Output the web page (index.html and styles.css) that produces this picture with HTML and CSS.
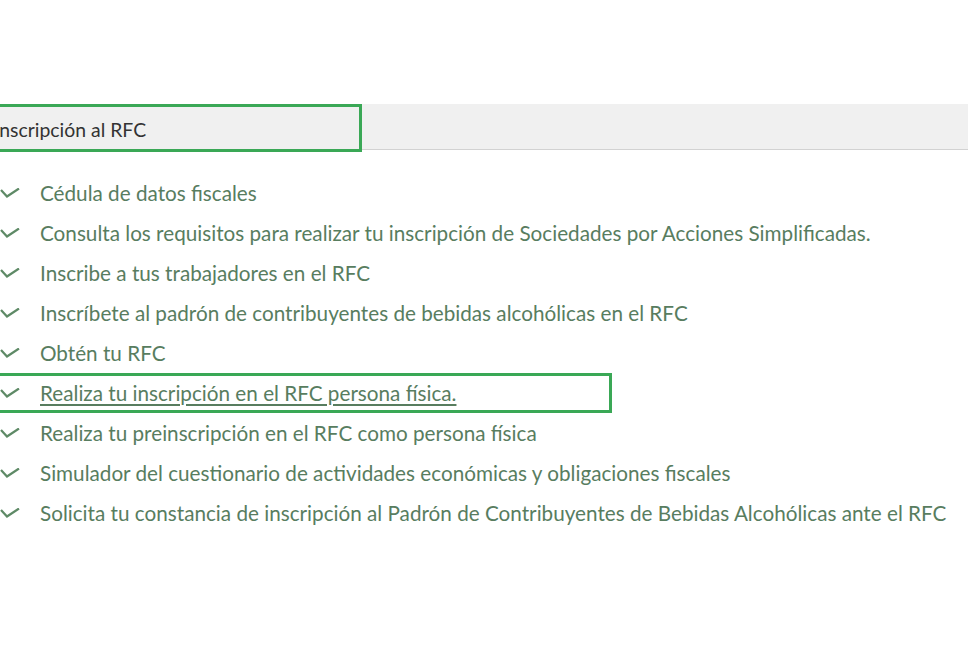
FILE: index.html
```html
<!DOCTYPE html>
<html lang="es">
<head>
    <meta charset="UTF-8">
    <meta name="viewport" content="width=device-width, initial-scale=1.0">
    <title>Inscripción al RFC</title>
    <link rel="stylesheet" href="styles.css">
</head>
<body>

    <!-- Section header -->
    <div class="section-bar">
        <div class="section-title marked">Inscripción al RFC</div>
    </div>

    <!-- Procedures list -->
    <ul class="procedures">
        <li class="item">
            <svg class="check" viewBox="0 0 20 10"><polyline points="1,2 7,8.5 19,0.5"/></svg>
            <span>Cédula de datos fiscales</span>
        </li>
        <li class="item">
            <svg class="check" viewBox="0 0 20 10"><polyline points="1,2 7,8.5 19,0.5"/></svg>
            <span>Consulta los requisitos para realizar tu inscripción de Sociedades por Acciones Simplificadas.</span>
        </li>
        <li class="item">
            <svg class="check" viewBox="0 0 20 10"><polyline points="1,2 7,8.5 19,0.5"/></svg>
            <span>Inscribe a tus trabajadores en el RFC</span>
        </li>
        <li class="item">
            <svg class="check" viewBox="0 0 20 10"><polyline points="1,2 7,8.5 19,0.5"/></svg>
            <span>Inscríbete al padrón de contribuyentes de bebidas alcohólicas en el RFC</span>
        </li>
        <li class="item">
            <svg class="check" viewBox="0 0 20 10"><polyline points="1,2 7,8.5 19,0.5"/></svg>
            <span>Obtén tu RFC</span>
        </li>
        <li class="item marked">
            <svg class="check" viewBox="0 0 20 10"><polyline points="1,2 7,8.5 19,0.5"/></svg>
            <a href="#">Realiza tu inscripción en el RFC persona física.</a>
        </li>
        <li class="item">
            <svg class="check" viewBox="0 0 20 10"><polyline points="1,2 7,8.5 19,0.5"/></svg>
            <span>Realiza tu preinscripción en el RFC como persona física</span>
        </li>
        <li class="item">
            <svg class="check" viewBox="0 0 20 10"><polyline points="1,2 7,8.5 19,0.5"/></svg>
            <span>Simulador del cuestionario de actividades económicas y obligaciones fiscales</span>
        </li>
        <li class="item">
            <svg class="check" viewBox="0 0 20 10"><polyline points="1,2 7,8.5 19,0.5"/></svg>
            <span>Solicita tu constancia de inscripción al Padrón de Contribuyentes de Bebidas Alcohólicas ante el RFC</span>
        </li>
    </ul>

</body>
</html>
```

FILE: styles.css
```css
* {
    margin: 0;
    padding: 0;
    box-sizing: border-box;
}
body {
    font-family: Lato, "Open Sans", sans-serif;
    background: #fff;
    overflow: hidden;
}

/* Grey header bar */
.section-bar {
    margin-top: 105px;
    height: 46px;
    background: #f0f0f0;
    border-bottom: 1px solid #d2d2d2;
}

.section-title {
    width: 368px;
    height: 48px;
    margin-left: -6px;
    margin-top: -1px;
    padding-top: 3px;
    display: flex;
    align-items: center;
    font-size: 19.4px;
    color: #333;
}

/* Green highlight frame */
.marked {
    outline: 3px solid #3aa856;
    outline-offset: -3px;
}

/* List of procedures */
.procedures {
    list-style: none;
    margin-top: 23px;
}

.item {
    display: flex;
    align-items: center;
    gap: 20px;
    height: 40px;
    font-size: 20.7px;
    color: #587d5f;
}

.item.marked {
    width: 615px;
    margin-left: -3px;
    padding-left: 3px;
}

.check {
    width: 20px;
    height: 10px;
    flex-shrink: 0;
    fill: none;
    stroke: #5e8a66;
    stroke-width: 2.2;
}

.item a {
    color: #587d5f;
    text-decoration: underline;
    text-underline-offset: 3px;
}
```
